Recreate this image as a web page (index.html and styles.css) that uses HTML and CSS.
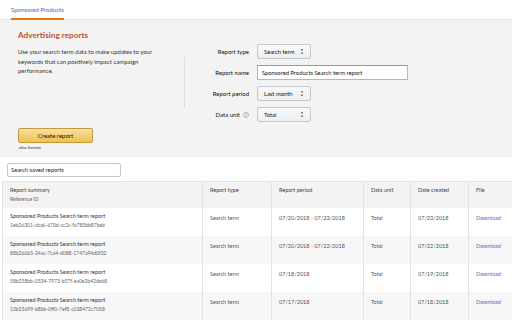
FILE: index.html
```html
<!DOCTYPE html>
<html>
<head>
  <title>Advertising reports</title>
  <meta name="viewport" content="width=device-width, initial-scale=1">
  <link rel="stylesheet" href="styles.css">
</head>
<body>
  <nav class="tabs">
    <a class="tab active">Sponsored Products</a>
  </nav>

  <section class="panel">
    <h2 class="panel-title">Advertising reports</h2>
    <div class="panel-body">
      <p class="intro">Use your search term data to make updates to your keywords that can positively impact campaign performance.</p>
      <div class="divider"></div>
      <div class="form">
        <label class="form-label">Report type</label>
        <div class="select short">Search term<span class="arrows"></span></div>
        <label class="form-label">Report name</label>
        <div class="text-input long">Sponsored Products Search term report</div>
        <label class="form-label">Report period</label>
        <div class="select short">Last month<span class="arrows"></span></div>
        <label class="form-label">Data unit
          <svg class="help" viewBox="0 0 10 10" width="6" height="6">
            <circle cx="5" cy="5" r="4.3" fill="none" stroke="#888" stroke-width="0.9"/>
            <path d="M3.6 3.9 C3.6 2.4 6.4 2.4 6.4 3.9 C6.4 5 5 5 5 6.1" fill="none" stroke="#888" stroke-width="0.9"/>
            <circle cx="5" cy="7.4" r="0.55" fill="#888"/>
          </svg>
        </label>
        <div class="select short">Total<span class="arrows"></span></div>
      </div>
    </div>
    <button class="btn-create">Create report</button>
    <div class="format">.xlsx format</div>
  </section>

  <div class="search">Search saved reports</div>

  <table class="reports">
    <thead>
      <tr>
        <th class="col-summary">Report summary<span class="sub">Reference ID</span></th>
        <th class="col-type">Report type</th>
        <th class="col-period">Report period</th>
        <th class="col-unit">Data unit</th>
        <th class="col-date">Date created</th>
        <th class="col-file">File</th>
      </tr>
    </thead>
    <tbody>
      <tr>
        <td>Sponsored Products Search term report<span class="sub">1eb26301-cba6-670d-cc2c-fa783bb87beb</span></td>
        <td>Search term</td>
        <td>07/20/2018 - 07/23/2018</td>
        <td>Total</td>
        <td>07/23/2018</td>
        <td><a class="link">Download</a></td>
      </tr>
      <tr>
        <td>Sponsored Products Search term report<span class="sub">88b26065-24ac-7ca4-d088-1747a94d0f32</span></td>
        <td>Search term</td>
        <td>07/20/2018 - 07/22/2018</td>
        <td>Total</td>
        <td>07/22/2018</td>
        <td><a class="link">Download</a></td>
      </tr>
      <tr>
        <td>Sponsored Products Search term report<span class="sub">58b258bb-0534-7973-b57f-ea0e3b42de68</span></td>
        <td>Search term</td>
        <td>07/18/2018</td>
        <td>Total</td>
        <td>07/19/2018</td>
        <td><a class="link">Download</a></td>
      </tr>
      <tr>
        <td>Sponsored Products Search term report<span class="sub">12b25699-b8bb-0ff0-7ef8-c038472c7058</span></td>
        <td>Search term</td>
        <td>07/17/2018</td>
        <td>Total</td>
        <td>07/18/2018</td>
        <td><a class="link">Download</a></td>
      </tr>
    </tbody>
  </table>
</body>
</html>
```

FILE: styles.css
```css
html, body {
  margin: 0;
  padding: 0;
}
body {
  font-family: Lato, "Open Sans", sans-serif;
  font-size: 6px;
  color: #333;
  background: #fff;
  overflow: hidden;
}

/* tabs */
.tabs {
  height: 19px;
  border-bottom: 1px solid #e3e3e3;
  padding-left: 11px;
  display: flex;
  align-items: flex-end;
}
.tab {
  color: #5064c2;
  font-size: 6px;
  line-height: 8px;
  padding: 3px 0 4px;
  border-bottom: 2px solid #e47911;
  margin-bottom: -1px;
  white-space: nowrap;
}

/* panel */
.panel {
  background: #f3f3f3;
  padding: 10px 18px 0;
  height: 127px;
}
.panel-title {
  margin: 0;
  font-size: 8.2px;
  line-height: 11px;
  font-weight: 700;
  color: #c7511f;
}
.panel-body {
  display: flex;
  margin-top: 3px;
}
.intro {
  width: 136px;
  margin: 0;
  padding-top: 3px;
  font-size: 6px;
  line-height: 9.6px;
  color: #333;
}
.divider {
  margin-left: 30px;
  margin-top: 13px;
  height: 51px;
  border-left: 1px solid #dedede;
}
.form {
  display: grid;
  grid-template-columns: 64px auto;
  column-gap: 8px;
  row-gap: 6px;
  align-items: center;
  align-content: start;
}
.form-label {
  display: flex;
  justify-content: flex-end;
  align-items: center;
  gap: 3px;
  font-size: 6px;
  color: #111;
}
.help {
  display: block;
}
.select {
  position: relative;
  height: 15px;
  box-sizing: border-box;
  border: 1px solid #c5c8cd;
  border-radius: 2px;
  background: linear-gradient(#f8f9fa, #eceef0);
  padding-left: 6px;
  line-height: 13px;
  font-size: 5.8px;
  color: #111;
}
.short {
  width: 54px;
}
.arrows {
  position: absolute;
  right: 7px;
  top: 4px;
  width: 2px;
  height: 5px;
  background:
    linear-gradient(#888, #888) left top / 2px 1px no-repeat,
    linear-gradient(#888, #888) left bottom / 2px 1px no-repeat,
    linear-gradient(#aaa, #aaa) left 1px / 2px 1px no-repeat,
    linear-gradient(#aaa, #aaa) left 3px / 2px 1px no-repeat;
}
.text-input {
  height: 15px;
  box-sizing: border-box;
  border: 1px solid #b7b7b7;
  border-top-color: #999;
  background: #fff;
  padding-left: 4px;
  line-height: 13px;
  font-size: 5.8px;
  color: #111;
}
.long {
  width: 151px;
}
.btn-create {
  display: block;
  margin-top: 6px;
  width: 75px;
  height: 15px;
  border: 1px solid #c49a3a;
  border-radius: 2px;
  background: linear-gradient(#f7dfa5, #f0c14b);
  font-family: Lato, "Open Sans", sans-serif;
  font-size: 6px;
  color: #111;
  padding: 0;
}
.format {
  font-size: 4.5px;
  margin-top: 2px;
  color: #333;
}

/* search */
.search {
  margin: 6px 0 0 7px;
  width: 114px;
  height: 14px;
  box-sizing: border-box;
  border: 1px solid #c8c8c8;
  border-radius: 2px;
  padding-left: 3px;
  line-height: 12px;
  font-size: 5.8px;
  color: #222;
}

/* table */
.reports {
  margin: 4px 0 0 2px;
  width: 510px;
  border-collapse: collapse;
  table-layout: fixed;
  font-size: 5.5px;
  color: #555;
}
.reports th,
.reports td {
  border: 1px solid #e3e3e3;
  border-bottom: none;
  border-top: none;
  text-align: left;
  vertical-align: top;
  padding: 6px 4px 0 7px;
  font-weight: 400;
}
.reports th:last-child,
.reports td:last-child {
  border-right: none;
}
.reports thead tr {
  background: #f3f3f3;
  border-top: 1px solid #e3e3e3;
  height: 26px;
}
.reports th {
  color: #444;
  padding-top: 5px;
  font-size: 5.5px;
}
.reports tbody tr {
  height: 28px;
}
.reports tbody tr:nth-child(even) {
  background: #f7f7f7;
}
.reports td:first-child {
  color: #333;
  padding-top: 5px;
}
.reports td:not(:first-child) {
  padding-top: 7px;
}
.sub {
  display: block;
  font-size: 5px;
  margin-top: 3px;
  color: #666;
}
.col-summary { width: 188px; }
.col-type { width: 57px; }
.col-period { width: 80px; }
.col-unit { width: 35px; }
.col-date { width: 46px; }
.col-file { width: 34px; }
.link {
  color: #4d6fc4;
}
```
